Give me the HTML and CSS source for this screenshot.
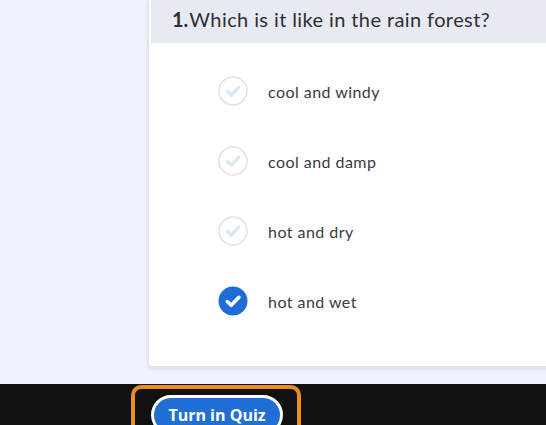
FILE: index.html
```html
<!DOCTYPE html>
<html>
<head>
<meta charset="utf-8">
<link rel="stylesheet" href="styles.css">
</head>
<body>
<div class="page">
  <main class="main">
    <section class="card">
      <header class="question"><span class="num">1.</span>Which is it like in the rain forest?</header>
      <ul class="options">
        <li class="option"><span class="check"><svg viewBox="0 0 30 30" width="30" height="30"><circle cx="15" cy="15" r="14" fill="#fff" stroke="#dfe2e7" stroke-width="1.6"/><path d="M9.5 15.5 L13.3 19.2 L20.8 11.2" fill="none" stroke="#dce6ef" stroke-width="3.2" stroke-linecap="round" stroke-linejoin="round"/></svg></span><span class="label">cool and windy</span></li>
        <li class="option"><span class="check"><svg viewBox="0 0 30 30" width="30" height="30"><circle cx="15" cy="15" r="14" fill="#fff" stroke="#dfe2e7" stroke-width="1.6"/><path d="M9.5 15.5 L13.3 19.2 L20.8 11.2" fill="none" stroke="#dce6ef" stroke-width="3.2" stroke-linecap="round" stroke-linejoin="round"/></svg></span><span class="label">cool and damp</span></li>
        <li class="option"><span class="check"><svg viewBox="0 0 30 30" width="30" height="30"><circle cx="15" cy="15" r="14" fill="#fff" stroke="#dfe2e7" stroke-width="1.6"/><path d="M9.5 15.5 L13.3 19.2 L20.8 11.2" fill="none" stroke="#dce6ef" stroke-width="3.2" stroke-linecap="round" stroke-linejoin="round"/></svg></span><span class="label">hot and dry</span></li>
        <li class="option"><span class="check"><svg viewBox="0 0 30 30" width="30" height="30"><circle cx="15" cy="15" r="14.5" fill="#1c6dd6"/><path d="M9.3 15.6 L13.2 19.3 L20.9 11.3" fill="none" stroke="#fff" stroke-width="3.6" stroke-linecap="round" stroke-linejoin="round"/></svg></span><span class="label">hot and wet</span></li>
      </ul>
    </section>
  </main>
  <footer class="footer">
    <div class="focus-ring">
      <button class="turn-in">Turn in Quiz</button>
    </div>
  </footer>
</div>
</body>
</html>
```
FILE: styles.css
```css
html, body {
  margin: 0;
  padding: 0;
}
body {
  width: 546px;
  height: 425px;
  overflow: hidden;
  background: #eff3fb;
  font-family: Lato, "Open Sans", sans-serif;
}
.page {
  display: flex;
  flex-direction: column;
  height: 425px;
}
.main {
  height: 384px;
  padding-left: 148px;
  box-sizing: border-box;
}
.card {
  width: 420px;
  height: 367px;
  box-sizing: border-box;
  background: #fff;
  border-left: 1px solid #dfe3ea;
  border-bottom: 1px solid #e3e6ec;
  border-bottom-left-radius: 5px;
  box-shadow: 0 2px 4px rgba(40, 50, 80, 0.12);
  padding: 0 0 0 2px;
}
.question {
  height: 43px;
  background: #e8eaf1;
  display: flex;
  align-items: center;
  padding-left: 21px;
  padding-bottom: 6px;
  box-sizing: border-box;
  font-size: 20px;
  letter-spacing: 0.4px;
  color: #2e2e35;
}
.num {
  font-weight: 700;
  margin-right: 1px;
  letter-spacing: 0;
}
.options {
  list-style: none;
  margin: 0;
  padding: 13px 0 0 67px;
}
.option {
  height: 70px;
  display: flex;
  align-items: center;
  gap: 20px;
}
.check {
  width: 30px;
  height: 30px;
  display: flex;
}
.label {
  font-size: 16px;
  color: #3a3a40;
  letter-spacing: 0.45px;
}
.footer {
  flex: 1;
  background: #111111;
  padding: 1px 0 0 131px;
  overflow: hidden;
}
.focus-ring {
  width: 170px;
  height: 60px;
  box-sizing: border-box;
  border: 4px solid #ef8a1f;
  border-radius: 10px;
  padding: 6px 0 0 16px;
}
.turn-in {
  width: 132px;
  height: 40px;
  background: #1f6fd5;
  border: 3px solid #fff;
  border-radius: 20px;
  color: #fff;
  font-family: "Open Sans", Lato, sans-serif;
  font-weight: 700;
  font-size: 16px;
  padding: 0;
  text-align: center;
}
```
